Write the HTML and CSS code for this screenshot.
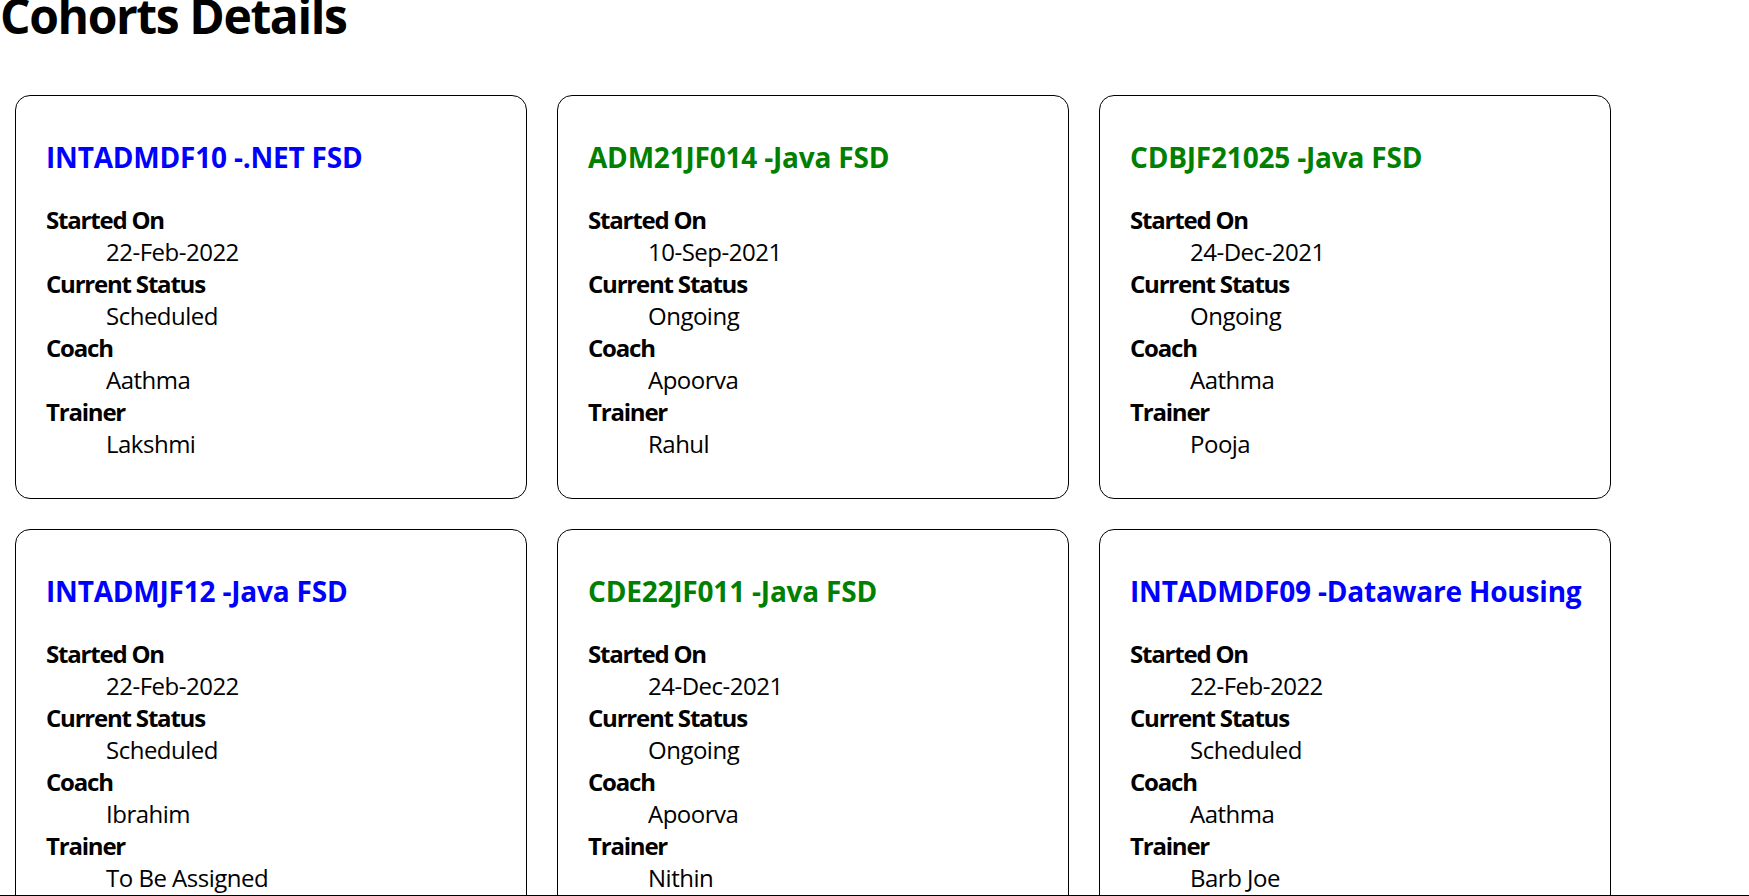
FILE: index.html
```html
<!DOCTYPE html>
<html lang="en">
<head>
<meta charset="utf-8">
<title>Cohorts Details</title>
<link rel="stylesheet" href="styles.css">
</head>
<body>
<h1 class="page-title">Cohorts Details</h1>
<div class="cohorts">
  <div class="card">
    <h3 class="cohort-name scheduled">INTADMDF10 -.NET FSD</h3>
    <dl class="details">
      <dt>Started On</dt><dd>22-Feb-2022</dd>
      <dt>Current Status</dt><dd>Scheduled</dd>
      <dt>Coach</dt><dd>Aathma</dd>
      <dt>Trainer</dt><dd>Lakshmi</dd>
    </dl>
  </div>
  <div class="card">
    <h3 class="cohort-name ongoing">ADM21JF014 -Java FSD</h3>
    <dl class="details">
      <dt>Started On</dt><dd>10-Sep-2021</dd>
      <dt>Current Status</dt><dd>Ongoing</dd>
      <dt>Coach</dt><dd>Apoorva</dd>
      <dt>Trainer</dt><dd>Rahul</dd>
    </dl>
  </div>
  <div class="card">
    <h3 class="cohort-name ongoing">CDBJF21025 -Java FSD</h3>
    <dl class="details">
      <dt>Started On</dt><dd>24-Dec-2021</dd>
      <dt>Current Status</dt><dd>Ongoing</dd>
      <dt>Coach</dt><dd>Aathma</dd>
      <dt>Trainer</dt><dd>Pooja</dd>
    </dl>
  </div>
  <div class="card">
    <h3 class="cohort-name scheduled">INTADMJF12 -Java FSD</h3>
    <dl class="details">
      <dt>Started On</dt><dd>22-Feb-2022</dd>
      <dt>Current Status</dt><dd>Scheduled</dd>
      <dt>Coach</dt><dd>Ibrahim</dd>
      <dt>Trainer</dt><dd>To Be Assigned</dd>
    </dl>
  </div>
  <div class="card">
    <h3 class="cohort-name ongoing">CDE22JF011 -Java FSD</h3>
    <dl class="details">
      <dt>Started On</dt><dd>24-Dec-2021</dd>
      <dt>Current Status</dt><dd>Ongoing</dd>
      <dt>Coach</dt><dd>Apoorva</dd>
      <dt>Trainer</dt><dd>Nithin</dd>
    </dl>
  </div>
  <div class="card">
    <h3 class="cohort-name scheduled">INTADMDF09 -Dataware Housing</h3>
    <dl class="details">
      <dt>Started On</dt><dd>22-Feb-2022</dd>
      <dt>Current Status</dt><dd>Scheduled</dd>
      <dt>Coach</dt><dd>Aathma</dd>
      <dt>Trainer</dt><dd>Barb Joe</dd>
    </dl>
  </div>
</div>
<div class="bottom-rule"></div>
</body>
</html>
```

FILE: styles.css
```css
html, body {
  margin: 0;
  padding: 0;
  background: #ffffff;
}

body {
  font-family: "Open Sans", "Noto Sans", sans-serif;
  font-size: 24px;
  color: #000000;
}

.page-title {
  margin: -16px 0 32px 0;
  font-size: 48px;
  line-height: 64px;
  font-weight: 700;
  letter-spacing: -1.4px;
}

.cohorts {
  display: flex;
  flex-wrap: wrap;
}

.card {
  box-sizing: border-box;
  width: 512px;
  height: 404px;
  margin: 15px;
  padding: 43px 30px 38px 30px;
  border: 1px solid #000000;
  border-radius: 15px;
}

.cohort-name {
  margin: 0;
  font-size: 28px;
  line-height: 37px;
  font-weight: 700;
  letter-spacing: -0.2px;
  white-space: nowrap;
}

.cohort-name.scheduled { color: #0000ff; }
.cohort-name.ongoing { color: #008000; }

.details {
  margin: 28px 0 0 0;
  line-height: 32px;
  letter-spacing: -0.5px;
}

.details dt {
  font-weight: 700;
  letter-spacing: -1.2px;
}

.details dd {
  margin: 0 0 0 60px;
}

.bottom-rule {
  position: fixed;
  left: 0;
  right: 0;
  bottom: 0;
  height: 1px;
  background: #000000;
}
```
